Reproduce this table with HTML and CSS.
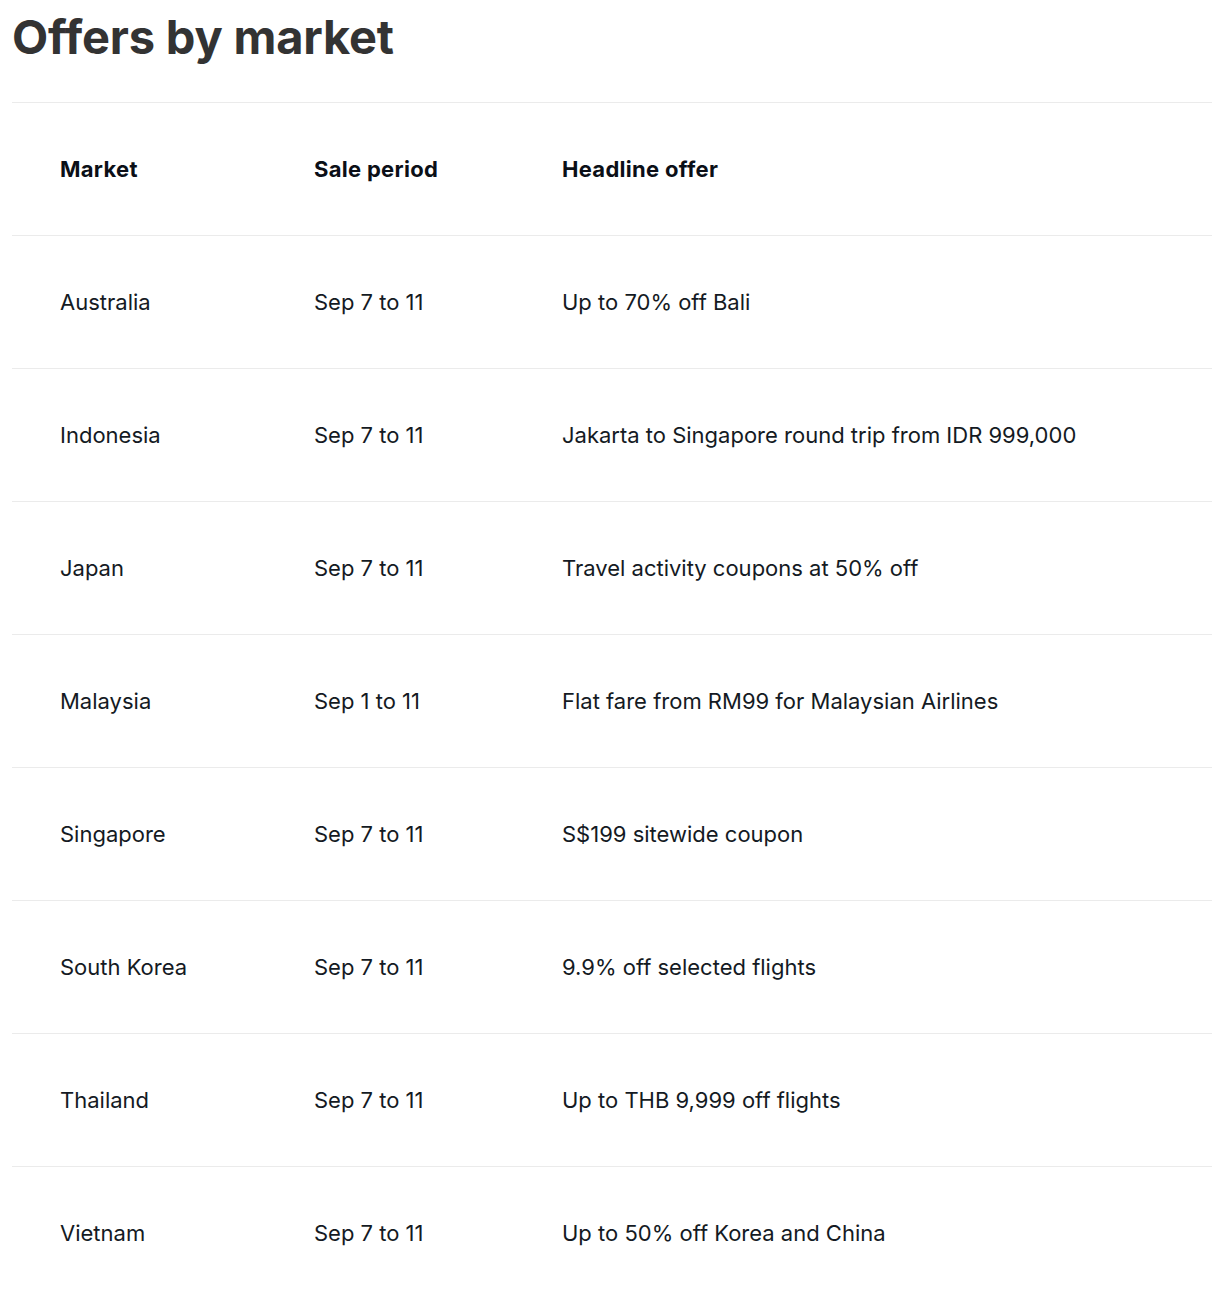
FILE: index.html
```html
<!DOCTYPE html>
<html lang="en">
<head>
<meta charset="utf-8">
<title>Offers by market</title>
<link rel="stylesheet" href="styles.css">
</head>
<body>
<main class="page">
  <h2 class="title">Offers by market</h2>
  <div class="table">
    <div class="row head">
      <div class="cell">Market</div>
      <div class="cell">Sale period</div>
      <div class="cell">Headline offer</div>
    </div>
    <div class="row">
      <div class="cell">Australia</div>
      <div class="cell">Sep 7 to 11</div>
      <div class="cell">Up to 70% off Bali</div>
    </div>
    <div class="row">
      <div class="cell">Indonesia</div>
      <div class="cell">Sep 7 to 11</div>
      <div class="cell">Jakarta to Singapore round trip from IDR 999,000</div>
    </div>
    <div class="row">
      <div class="cell">Japan</div>
      <div class="cell">Sep 7 to 11</div>
      <div class="cell">Travel activity coupons at 50% off</div>
    </div>
    <div class="row">
      <div class="cell">Malaysia</div>
      <div class="cell">Sep 1 to 11</div>
      <div class="cell">Flat fare from RM99 for Malaysian Airlines</div>
    </div>
    <div class="row">
      <div class="cell">Singapore</div>
      <div class="cell">Sep 7 to 11</div>
      <div class="cell">S$199 sitewide coupon</div>
    </div>
    <div class="row">
      <div class="cell">South Korea</div>
      <div class="cell">Sep 7 to 11</div>
      <div class="cell">9.9% off selected flights</div>
    </div>
    <div class="row">
      <div class="cell">Thailand</div>
      <div class="cell">Sep 7 to 11</div>
      <div class="cell">Up to THB 9,999 off flights</div>
    </div>
    <div class="row">
      <div class="cell">Vietnam</div>
      <div class="cell">Sep 7 to 11</div>
      <div class="cell">Up to 50% off Korea and China</div>
    </div>
  </div>
</main>
</body>
</html>
```

FILE: styles.css
```css
html, body {
  margin: 0;
  padding: 0;
  background: #ffffff;
}

.page {
  padding: 0 14px 0 12px;
  font-family: Inter, "Noto Sans", "Liberation Sans", sans-serif;
}

.title {
  margin: 0;
  padding-top: 8px;
  height: 102px;
  box-sizing: border-box;
  font-size: 47px;
  line-height: 58px;
  font-weight: 700;
  color: #333333;
  letter-spacing: -0.2px;
}

.table {
  display: flex;
  flex-direction: column;
}

.row {
  display: grid;
  grid-template-columns: 254px 248px 1fr;
  height: 133px;
  align-items: center;
  border-top: 1px solid #ebebeb;
  box-sizing: border-box;
  font-size: 22px;
  color: #141a23;
}

.row.head {
  font-weight: 700;
  color: #0b0f17;
  letter-spacing: 0.3px;
}

.cell {
  padding-left: 48px;
  line-height: 30px;
}
```
